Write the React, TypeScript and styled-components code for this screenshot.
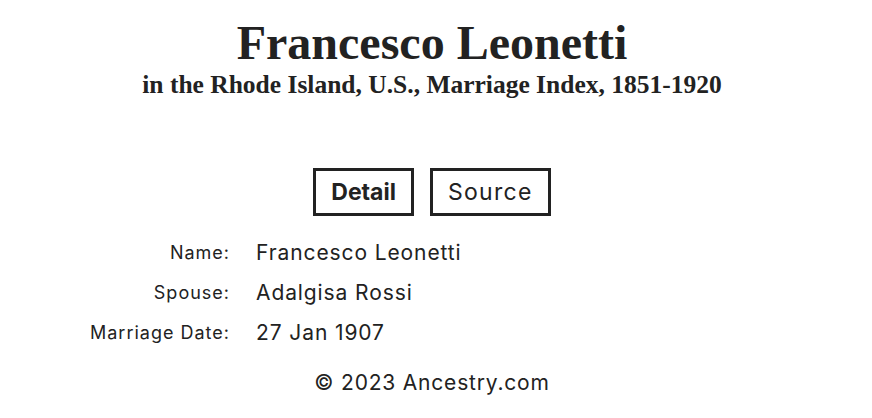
import React from 'react'
import styled, { createGlobalStyle } from 'styled-components'

const GlobalStyle = createGlobalStyle`
  html, body {
    margin: 0;
    padding: 0;
    background: #fff;
  }
  body {
    font-family: Inter, "Liberation Sans", Arial, sans-serif;
    color: #222;
  }
`

const Page = styled.div`
  width: 872px;
  height: 418px;
  box-sizing: border-box;
  padding: 16px 8px 0 0;
  display: flex;
  flex-direction: column;
`

const Header = styled.header`
  display: flex;
  flex-direction: column;
  align-items: center;
  font-family: "Liberation Serif", "Times New Roman", serif;
  color: #222;
`

const Title = styled.h1`
  margin: 0;
  font-size: 48px;
  line-height: 54px;
  font-weight: 700;
`

const Subtitle = styled.h2`
  margin: 0;
  font-size: 25.5px;
  line-height: 30px;
  font-weight: 700;
`

const Tabs = styled.div`
  display: flex;
  justify-content: center;
  gap: 16px;
  margin-top: 68px;
`

const Tab = styled.button<{ $active?: boolean }>`
  box-sizing: border-box;
  height: 48px;
  padding: 0 15px;
  border: 3px solid #222;
  background: #fff;
  color: #222;
  font-family: Inter, "Liberation Sans", Arial, sans-serif;
  font-size: 23px;
  letter-spacing: ${(p) => (p.$active ? '0' : '1.3px')};
  font-weight: ${(p) => (p.$active ? 700 : 400)};
  cursor: pointer;
`

const Details = styled.dl`
  margin: 17px 0 0;
  display: grid;
  grid-template-columns: 230px auto;
  column-gap: 26px;
  row-gap: 0;
`

const Label = styled.dt`
  text-align: right;
  font-size: 18px;
  letter-spacing: 1px;
  line-height: 40px;
  color: #222;
`

const Value = styled.dd`
  margin: 0;
  font-size: 21px;
  letter-spacing: 0.9px;
  line-height: 40px;
  color: #222;
`

const Footer = styled.footer`
  margin-top: 15px;
  text-align: center;
  font-size: 21px;
  letter-spacing: 0.8px;
  line-height: 30px;
  color: #222;
`

const rows = [
  ['Name:', 'Francesco Leonetti'],
  ['Spouse:', 'Adalgisa Rossi'],
  ['Marriage Date:', '27 Jan 1907'],
]

export default function App() {
  return (
    <>
      <GlobalStyle />
      <Page>
        <Header>
          <Title>Francesco Leonetti</Title>
          <Subtitle>in the Rhode Island, U.S., Marriage Index, 1851-1920</Subtitle>
        </Header>
        <Tabs>
          <Tab $active>Detail</Tab>
          <Tab>Source</Tab>
        </Tabs>
        <Details>
          {rows.map(([label, value]) => (
            <React.Fragment key={label}>
              <Label>{label}</Label>
              <Value>{value}</Value>
            </React.Fragment>
          ))}
        </Details>
        <Footer>© 2023 Ancestry.com</Footer>
      </Page>
    </>
  )
}
